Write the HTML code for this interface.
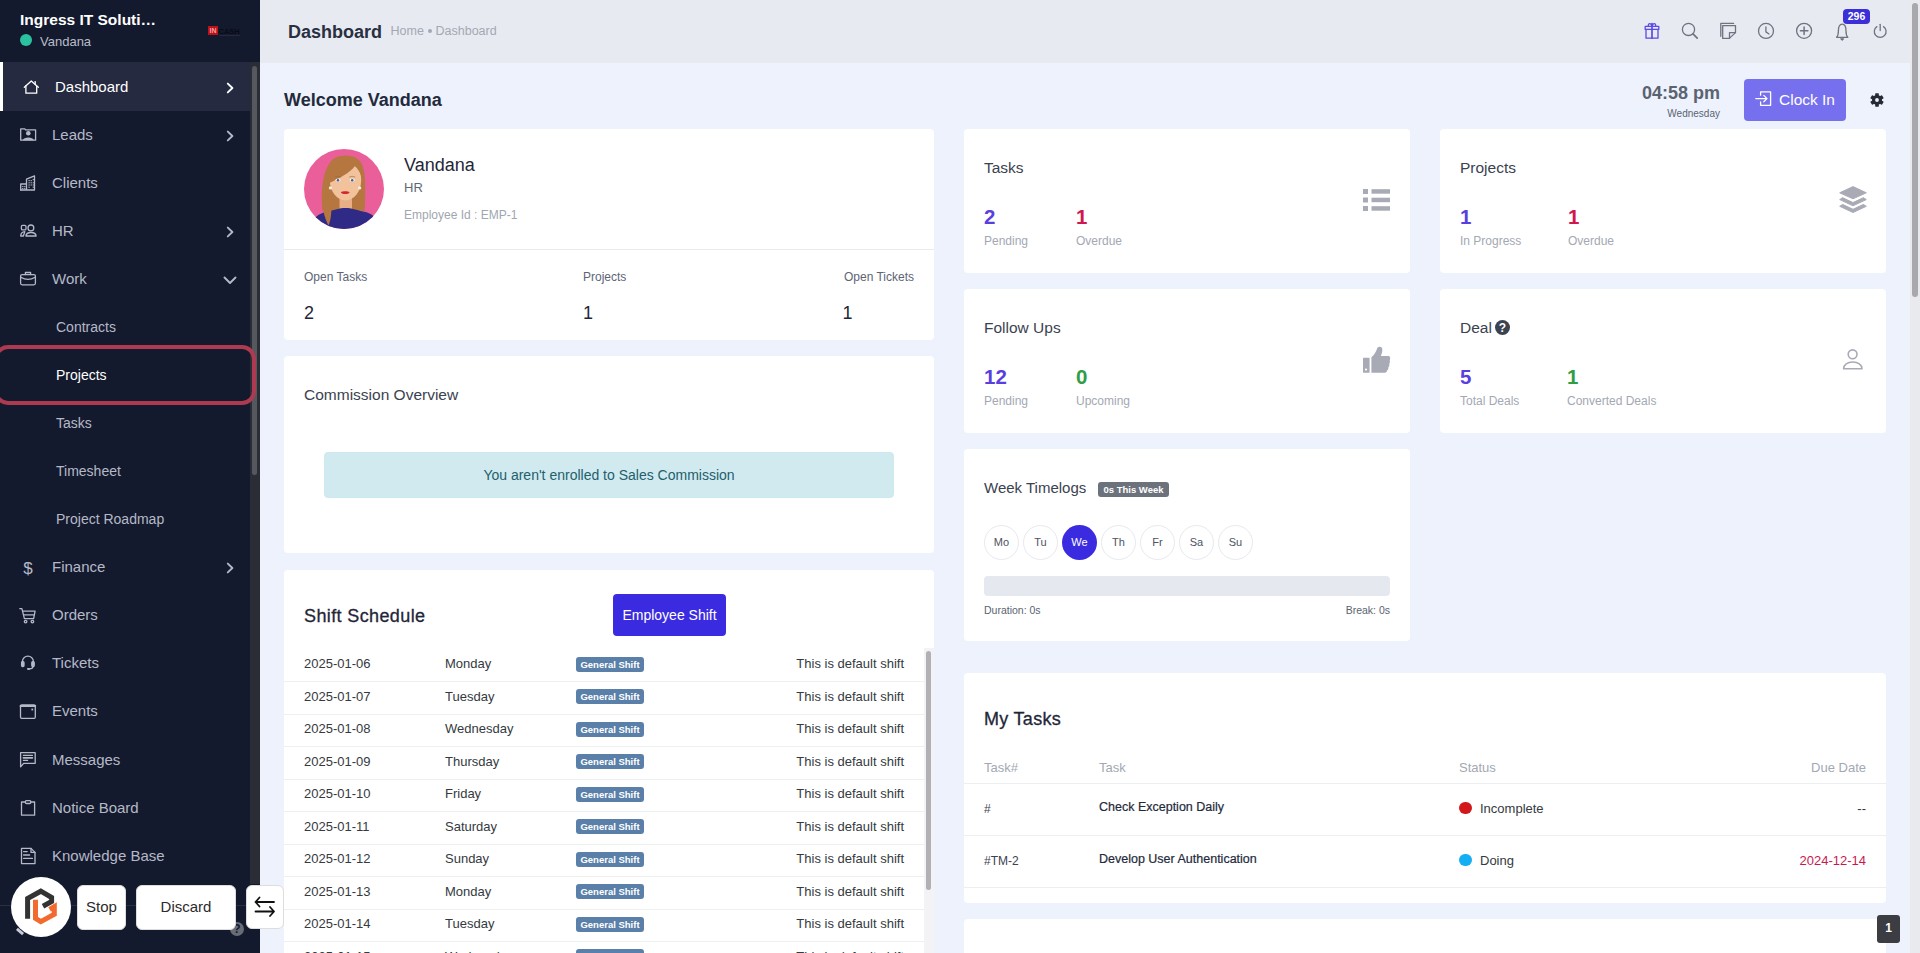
<!DOCTYPE html><html><head><meta charset="utf-8"><style>
html,body{margin:0;padding:0;width:1920px;height:953px;overflow:hidden;font-family:"Liberation Sans",sans-serif}
.t{position:absolute;line-height:1;white-space:nowrap}
</style></head><body>
<div style="position:absolute;left:0px;top:0px;width:1920px;height:953px;background:#edf2fc"></div>
<div style="position:absolute;left:260px;top:0px;width:1660px;height:63px;background:#e8eaf1"></div>
<div style="position:absolute;left:1910px;top:0px;width:10px;height:953px;background:#e9eaed"></div>
<div style="position:absolute;left:1912px;top:3px;width:6px;height:294px;background:#a8a8ad;border-radius:3px"></div>
<div style="position:absolute;left:0px;top:0px;width:260px;height:953px;background:#141a2d"></div>
<div class="t" style="left:20px;top:12.18px;font-size:15.5px;color:#ffffff;font-weight:700;">Ingress IT Soluti…</div>
<div style="position:absolute;left:20px;top:34px;width:12px;height:12px;background:#2bc39f;border-radius:50%"></div>
<div class="t" style="left:40px;top:34.50px;font-size:13px;color:#b9bdc9;font-weight:400;">Vandana</div>
<div style="position:absolute;left:208px;top:26px;width:10px;height:9px;background:#bb1118;color:#f3a0a0;font:bold 7px/9px 'Liberation Sans';text-align:center">IN</div>
<div class="t" style="left:218.5px;top:27.65px;font-size:7.5px;color:#080a14;font-weight:700;">CASH</div>
<div style="position:absolute;left:219px;top:35px;width:21px;height:1px;background:#262a3c"></div>
<div style="position:absolute;left:250px;top:62px;width:10px;height:822px;background:#2a2d35"></div>
<div style="position:absolute;left:252px;top:66px;width:5px;height:409px;background:#55585e;border-radius:3px"></div>
<div style="position:absolute;left:0px;top:62px;width:250px;height:49px;background:#252a40"></div>
<div style="position:absolute;left:0px;top:62px;width:3px;height:49px;background:#ffffff"></div>
<div class="t" style="left:55px;top:79.30px;font-size:15px;color:#ffffff;font-weight:400;">Dashboard</div>
<svg style="position:absolute;left:224px;top:80.5px" width="12" height="14" viewBox="0 0 12 14" fill="none" stroke="#ffffff" stroke-width="1.9" stroke-linecap="round" stroke-linejoin="round"><path d="M3.8 2.6 L8.4 7 L3.8 11.4"/></svg>
<div class="t" style="left:52px;top:127.30px;font-size:15px;color:#b4b9c8;font-weight:400;">Leads</div>
<svg style="position:absolute;left:224px;top:128.5px" width="12" height="14" viewBox="0 0 12 14" fill="none" stroke="#b4b9c8" stroke-width="1.9" stroke-linecap="round" stroke-linejoin="round"><path d="M3.8 2.6 L8.4 7 L3.8 11.4"/></svg>
<div class="t" style="left:52px;top:175.30px;font-size:15px;color:#b4b9c8;font-weight:400;">Clients</div>
<div class="t" style="left:52px;top:223.30px;font-size:15px;color:#b4b9c8;font-weight:400;">HR</div>
<svg style="position:absolute;left:224px;top:224.5px" width="12" height="14" viewBox="0 0 12 14" fill="none" stroke="#b4b9c8" stroke-width="1.9" stroke-linecap="round" stroke-linejoin="round"><path d="M3.8 2.6 L8.4 7 L3.8 11.4"/></svg>
<div class="t" style="left:52px;top:271.30px;font-size:15px;color:#b4b9c8;font-weight:400;">Work</div>
<svg style="position:absolute;left:223px;top:274px" width="14" height="12" viewBox="0 0 14 12" fill="none" stroke="#b4b9c8" stroke-width="1.9" stroke-linecap="round" stroke-linejoin="round"><path d="M1.5 3.5 L7 9 L12.5 3.5"/></svg>
<div class="t" style="left:56px;top:320.15px;font-size:14px;color:#b4b9c8;font-weight:400;">Contracts</div>
<div class="t" style="left:56px;top:368.15px;font-size:14px;color:#ffffff;font-weight:400;">Projects</div>
<div class="t" style="left:56px;top:416.15px;font-size:14px;color:#b4b9c8;font-weight:400;">Tasks</div>
<div class="t" style="left:56px;top:464.15px;font-size:14px;color:#b4b9c8;font-weight:400;">Timesheet</div>
<div class="t" style="left:56px;top:512.15px;font-size:14px;color:#b4b9c8;font-weight:400;">Project Roadmap</div>
<div style="position:absolute;left:-6px;top:345px;width:254px;height:52px;border:4px solid #ad3a50;border-radius:14px"></div>
<div class="t" style="left:52px;top:559.30px;font-size:15px;color:#b4b9c8;font-weight:400;">Finance</div>
<svg style="position:absolute;left:224px;top:560.5px" width="12" height="14" viewBox="0 0 12 14" fill="none" stroke="#b4b9c8" stroke-width="1.9" stroke-linecap="round" stroke-linejoin="round"><path d="M3.8 2.6 L8.4 7 L3.8 11.4"/></svg>
<div class="t" style="left:52px;top:607.30px;font-size:15px;color:#b4b9c8;font-weight:400;">Orders</div>
<div class="t" style="left:52px;top:655.30px;font-size:15px;color:#b4b9c8;font-weight:400;">Tickets</div>
<div class="t" style="left:52px;top:703.30px;font-size:15px;color:#b4b9c8;font-weight:400;">Events</div>
<div class="t" style="left:52px;top:752.30px;font-size:15px;color:#b4b9c8;font-weight:400;">Messages</div>
<div class="t" style="left:52px;top:800.30px;font-size:15px;color:#b4b9c8;font-weight:400;">Notice Board</div>
<div class="t" style="left:52px;top:848.30px;font-size:15px;color:#b4b9c8;font-weight:400;">Knowledge Base</div>
<svg style="position:absolute;left:0;top:0" width="260" height="953" viewBox="0 0 260 953" fill="none" stroke="#b4b9c8" stroke-width="1.3" stroke-linejoin="round" stroke-linecap="round">
<g stroke="#ffffff"><path d="M24.3 87.2 L31.3 80.9 L38.3 87.2"/><path d="M25.9 85.8 V93.2 H36.7 V85.8"/><path d="M35.2 81.6 V84.3"/></g>
<path d="M20.7 140.2 V128.8 H24.6 L25.6 129.9 H35.6 V140.2 Z"/>
<circle cx="28.3" cy="133.3" r="2.3" fill="#b4b9c8" stroke="none"/>
<path d="M22.8 140.2 C23.5 136.6 33.1 136.6 33.8 140.2 Z" fill="#b4b9c8" stroke="none"/>
<path d="M20.7 190 V184 H26.5"/><path d="M26.5 190 V179.2 L34.5 175.8 V190 H20.7"/>
<g fill="#b4b9c8" stroke="none"><rect x="28.5" y="180" width="1.2" height="1.2"/><rect x="30.6" y="180" width="1.2" height="1.2"/><rect x="32.7" y="179" width="1.2" height="1.2"/><rect x="28.5" y="182.2" width="1.2" height="1.2"/><rect x="30.6" y="182.2" width="1.2" height="1.2"/><rect x="32.7" y="182.2" width="1.2" height="1.2"/><rect x="28.5" y="184.4" width="1.2" height="1.2"/><rect x="30.6" y="184.4" width="1.2" height="1.2"/><rect x="32.7" y="184.4" width="1.2" height="1.2"/><rect x="28.5" y="186.6" width="1.2" height="1.2"/><rect x="32.7" y="186.6" width="1.2" height="1.2"/><rect x="22.2" y="186" width="1.2" height="1.2"/><rect x="24.2" y="186" width="1.2" height="1.2"/><rect x="22.2" y="188" width="1.2" height="1.2"/><rect x="24.2" y="188" width="1.2" height="1.2"/></g>
<circle cx="30.9" cy="227.9" r="2.9"/><path d="M25.9 236 C26.3 231.3 35.7 231.3 36.1 236 Z"/>
<rect x="21.4" y="225.3" width="4.6" height="4.6" rx="1.2"/><path d="M20.7 236 C20.8 233.6 22.4 231.8 24.8 231.6 L23.4 236 Z"/>
<rect x="20.6" y="274.6" width="14.8" height="10.2" rx="1.5"/><path d="M25.4 274.6 V272.5 H30.6 V274.6"/><path d="M20.8 277.2 Q28 281.6 35.2 277.2"/>
<path d="M19.8 608.7 H21.9 L24.4 618.7 H33.6 L35.1 611.2 H22.9"/><path d="M23.6 614.9 H34.3"/><circle cx="25.6" cy="621.6" r="1.3"/><circle cx="32.4" cy="621.6" r="1.3"/>
<path d="M22.4 664 V661.6 A5.5 5.5 0 0 1 33.4 661.6 V664"/><rect x="21.6" y="661.6" width="2.4" height="5" rx="1" fill="#b4b9c8"/><rect x="31.8" y="661.6" width="2.4" height="5" rx="1" fill="#b4b9c8"/><path d="M33 666.6 Q33 668.9 29.5 668.9"/><rect x="27" y="668.1" width="3" height="1.8" rx="0.8" fill="#b4b9c8" stroke="none"/>
<rect x="20.5" y="704.8" width="14.8" height="13.5" rx="1.2"/><path d="M20.5 706 H35.3" stroke-width="1.8"/><rect x="31.4" y="708.6" width="1.8" height="1.8" fill="#b4b9c8" stroke="none"/>
<path d="M20.6 752.7 H35.2 V763.3 H23.6 L20.6 766.8 Z"/><path d="M23.4 755.4 H32.4"/><path d="M23.4 757.8 H32.4" stroke-width="1.7"/><path d="M23.4 760.4 H27.6"/>
<path d="M25.4 802 H21.5 V815.2 H34.6 V802 H30.8"/><rect x="25.4" y="800.6" width="5.4" height="2.9" rx="1"/>
<path d="M21.5 848.4 H31 L35 852.4 V863.6 H21.5 Z"/><path d="M31 848.4 V852.4 H35"/><path d="M23.6 851.6 H27.2 M23.6 855 H29.6 M23.6 858.4 H32.4"/>
</svg>
<div class="t" style="left:23.2px;top:559.61px;font-size:17px;color:#b4b9c8;font-weight:400;">$</div>
<div style="position:absolute;left:0px;top:905px;width:260px;height:1px;background:#2a3044"></div>
<div style="position:absolute;left:16px;top:930px;width:8px;height:3px;background:#c9ccd6;transform:rotate(40deg)"></div>
<div style="position:absolute;left:229.5px;top:921.5px;width:14.5px;height:14.5px;background:#686c77;border-radius:50%"></div>
<div class="t" style="left:236.8px;transform:translateX(-50%);top:923.34px;font-size:12px;color:#141a2d;font-weight:700;">?</div>
<div style="position:absolute;left:11px;top:877px;width:60px;height:60px;border-radius:50%;background:#fff"></div>
<svg style="position:absolute;left:0;top:860px" width="80" height="80" viewBox="0 860 80 80" fill="none" stroke-width="5" stroke-linejoin="miter" stroke-linecap="butt"><path d="M27.6 918.8 V898.5 L40.8 891.2 L51.6 897.5 V901.5 L43 906.3" stroke="#333333"/><path d="M35.5 899.8 V918.3 L40.8 921.6 L54.3 914.2 V906.6 L49.6 909.3" stroke="#f26a2e"/></svg>
<div style="position:absolute;left:77px;top:885px;width:49px;height:45px;border-radius:6px;background:#fff;border:1px solid #ddd;box-sizing:border-box"></div>
<div class="t" style="left:101.5px;transform:translateX(-50%);top:899.30px;font-size:15px;color:#2b2b2b;font-weight:400;">Stop</div>
<div style="position:absolute;left:136px;top:885px;width:100px;height:45px;border-radius:6px;background:#fff;border:1px solid #ddd;box-sizing:border-box"></div>
<div class="t" style="left:186px;transform:translateX(-50%);top:899.30px;font-size:15px;color:#2b2b2b;font-weight:400;">Discard</div>
<div style="position:absolute;left:246px;top:885px;width:38px;height:44px;border-radius:6px;background:#fff;border:1px solid #ddd;box-sizing:border-box"></div>
<svg style="position:absolute;left:253px;top:895px" width="22" height="24" viewBox="0 0 22 24" fill="none" stroke="#111" stroke-width="1.8" stroke-linecap="round" stroke-linejoin="round"><path d="M2.5 7 H21 M6.5 2.5 L2.5 7 L6.5 11.5"/><path d="M21 16.5 H2.5 M17 12 L21 16.5 L17 21"/></svg>
<div class="t" style="left:288px;top:22.76px;font-size:18px;color:#283041;font-weight:700;">Dashboard</div>
<div class="t" style="left:390.5px;top:24.92px;font-size:12.5px;color:#a3a8b3;font-weight:400;">Home</div>
<div style="position:absolute;left:427.5px;top:29px;width:4px;height:4px;background:#a3a8b3;border-radius:50%"></div>
<div class="t" style="left:435.5px;top:24.92px;font-size:12.5px;color:#a3a8b3;font-weight:400;">Dashboard</div>
<svg style="position:absolute;left:1630px;top:0" width="270" height="62" viewBox="1630 0 270 62" fill="none" stroke="#6e7380" stroke-width="1.3" stroke-linecap="round" stroke-linejoin="round">
<g stroke="#5b4ae6"><rect x="1645.2" y="26.4" width="13.6" height="3"/><path d="M1646 29.4 V38.2 H1658 V29.4"/><path d="M1652 23.5 V38.2" stroke-width="1.7"/><path d="M1652 26.4 C1651 22.6 1648 22.6 1648.3 26.4"/><path d="M1652 26.4 C1653 22.6 1656 22.6 1655.7 26.4"/></g>
<circle cx="1688.5" cy="29.4" r="6.1"/><path d="M1693 33.9 L1697.2 38.1" stroke-width="1.7"/>
<path d="M1720.8 36.3 V23.4 H1733.6"/><path d="M1722.7 25.6 H1735.5 V32.6 L1729.3 38.4 H1722.7 Z"/><path d="M1735.5 32.6 H1729.5 V38.4"/>
<circle cx="1766" cy="30.9" r="7.5"/><path d="M1765.9 26.8 V31.9 L1769 34"/>
<circle cx="1804.1" cy="30.8" r="7.5"/><path d="M1804.1 27 V34.6 M1800.4 30.8 H1807.9" stroke-width="1.5"/>
<path d="M1836.6 37.3 C1838.3 35.6 1838.4 34 1838.4 31 C1838.4 26.3 1839.8 24.2 1842.2 24.2 C1844.6 24.2 1846 26.3 1846 31 C1846 34 1846.1 35.6 1847.8 37.3 Z"/><path d="M1840.9 38.8 H1843.5 L1842.2 40 Z" fill="#6e7380"/>
<path d="M1876.9 26.6 A5.9 5.9 0 1 0 1883.5 26.6"/><path d="M1880.2 24.3 V30.5"/>
</svg>
<div style="position:absolute;left:1843px;top:9px;width:27px;height:15px;border-radius:4px;background:#3b2fd9;color:#fff;font:bold 10.5px/15px 'Liberation Sans';text-align:center">296</div>
<div class="t" style="left:284px;top:90.76px;font-size:18px;color:#232a3b;font-weight:700;">Welcome Vandana</div>
<div class="t" style="right:200px;top:83.76px;font-size:18px;color:#5b6371;font-weight:700;">04:58 pm</div>
<div class="t" style="right:200px;top:108.53px;font-size:10px;color:#5b6371;font-weight:400;">Wednesday</div>
<div style="position:absolute;left:1744px;top:79px;width:102px;height:42px;border-radius:4px;background:#7770ee"></div>
<div class="t" style="left:1779px;top:92.38px;font-size:15.5px;color:#ffffff;font-weight:400;">Clock In</div>
<svg style="position:absolute;left:1750px;top:85px" width="30" height="30" viewBox="1750 85 30 30" fill="none" stroke="#fff" stroke-width="1.3" stroke-linecap="round" stroke-linejoin="round"><path d="M1755.8 98.6 H1767 M1763.8 95.4 L1767 98.6 L1763.8 101.8"/><path d="M1760.6 95.2 V91.9 H1770.6 V105.3 H1760.6 V102"/></svg>
<svg style="position:absolute;left:1867px;top:90px" width="20" height="20" viewBox="1867 90 20 20" fill="#262a35"><circle cx="1877" cy="100" r="5"/><rect x="1875.2" y="93.3" width="3.6" height="13.4" rx="0.4"/><rect x="1875.2" y="93.3" width="3.6" height="13.4" rx="0.4" transform="rotate(60 1877 100)"/><rect x="1875.2" y="93.3" width="3.6" height="13.4" rx="0.4" transform="rotate(120 1877 100)"/><circle cx="1877" cy="100" r="1.9" fill="#edf2fc"/></svg>
<div style="position:absolute;left:284px;top:129px;width:650px;height:211px;background:#ffffff;border-radius:4px"></div>
<svg style="position:absolute;left:304px;top:149px" width="80" height="80" viewBox="0 0 80 80">
<defs><clipPath id="av"><circle cx="40" cy="40" r="40"/></clipPath></defs>
<g clip-path="url(#av)">
<rect width="80" height="80" fill="#ea5f9a"/>
<path d="M18.6 62 C16.5 42 18.5 18 30 9.5 C37 5 50 5.5 56 12 C62.5 20 61.5 42 60.8 62 Z" fill="#b5773f"/>
<path d="M35.5 44 H48 V60.5 H35.5 Z" fill="#e8ae85"/>
<path d="M25.8 31 C25.8 19 33 14.5 41.5 14.5 C51 14.5 57.2 20 57.2 31 C57.2 42.5 50 51.4 41.5 51.4 C33 51.4 25.8 42.5 25.8 31 Z" fill="#f1c29b"/>
<path d="M23.5 34 C24 20 32 10.5 43 10.5 C52 10.5 57.5 17 58.5 29 C56 23 53.5 19.5 51 17 C46 24 36 28.5 26.5 33.5 Z" fill="#b5773f"/>
<path d="M7 80 C9 68 14 64.5 24 62.5 C31 61 35 59 41.5 59 C48 59 52 61 59 62.5 C69 64.5 73 68 75 80 Z" fill="#2e2a85"/>
<path d="M19 44 C17.5 58 20 68 24.5 76.5 C27.5 70 28 58 27.2 46 Z" fill="#b5773f"/>
<ellipse cx="34" cy="31.2" rx="2.6" ry="1.4" fill="#fff"/><circle cx="34" cy="31.2" r="1.3" fill="#3f5fa0"/>
<ellipse cx="48.2" cy="31.2" rx="2.6" ry="1.4" fill="#fff"/><circle cx="48.2" cy="31.2" r="1.3" fill="#3f5fa0"/>
<path d="M31 28 Q34 26.8 37 28" stroke="#9a6a3a" stroke-width="0.6" fill="none"/><path d="M45.2 28 Q48.2 26.8 51.2 28" stroke="#9a6a3a" stroke-width="0.6" fill="none"/>
<path d="M36.8 43.4 C38.5 42 44 42 45.6 43.4 C44 45.6 38.5 45.6 36.8 43.4 Z" fill="#d8262e"/>
<circle cx="26.5" cy="38.9" r="1.7" fill="#f4ecd8"/><circle cx="55.6" cy="38.9" r="1.7" fill="#f4ecd8"/>
</g></svg>
<div class="t" style="left:404px;top:155.76px;font-size:18px;color:#1f2638;font-weight:400;">Vandana</div>
<div class="t" style="left:404px;top:180.50px;font-size:13px;color:#5d6878;font-weight:400;">HR</div>
<div class="t" style="left:404px;top:209.34px;font-size:12px;color:#a0a6b0;font-weight:400;">Employee Id : EMP-1</div>
<div style="position:absolute;left:284px;top:249px;width:650px;height:1px;background:#e8eaee"></div>
<div class="t" style="left:304px;top:271.34px;font-size:12px;color:#5d6575;font-weight:400;">Open Tasks</div>
<div class="t" style="left:583px;top:271.34px;font-size:12px;color:#5d6575;font-weight:400;">Projects</div>
<div class="t" style="right:1006px;top:271.34px;font-size:12px;color:#5d6575;font-weight:400;">Open Tickets</div>
<div class="t" style="left:304px;top:303.76px;font-size:18px;color:#1f2638;font-weight:400;">2</div>
<div class="t" style="left:583px;top:303.76px;font-size:18px;color:#1f2638;font-weight:400;">1</div>
<div class="t" style="left:842.5px;top:303.76px;font-size:18px;color:#1f2638;font-weight:400;">1</div>
<div style="position:absolute;left:284px;top:356px;width:650px;height:197px;background:#ffffff;border-radius:4px"></div>
<div class="t" style="left:304px;top:386.88px;font-size:15.5px;color:#3b4250;font-weight:400;">Commission Overview</div>
<div style="position:absolute;left:324px;top:452px;width:570px;height:46px;box-sizing:border-box;border:1px solid #cde8ee;border-radius:4px;background:#d1eaf0"></div>
<div class="t" style="left:609px;transform:translateX(-50%);top:468.15px;font-size:14px;color:#22606c;font-weight:400;">You aren't enrolled to Sales Commission</div>
<div style="position:absolute;left:284px;top:570px;width:650px;height:400px;background:#ffffff;border-radius:4px"></div>
<div class="t" style="left:304px;top:606.76px;font-size:18px;color:#1f2638;font-weight:400;letter-spacing:0.38px;-webkit-text-stroke:0.3px #1f2638">Shift Schedule</div>
<div style="position:absolute;left:613px;top:594px;width:113px;height:42px;border-radius:4px;background:#3b2be0"></div>
<div class="t" style="left:669.5px;transform:translateX(-50%);top:608.15px;font-size:14px;color:#ffffff;font-weight:400;">Employee Shift</div>
<div class="t" style="left:304px;top:657.00px;font-size:13px;color:#343a40;font-weight:400;">2025-01-06</div>
<div class="t" style="left:445px;top:657.00px;font-size:13px;color:#343a40;font-weight:400;">Monday</div>
<div style="position:absolute;left:576px;top:656.5px;width:68px;height:15px;border-radius:3px;background:#5a7fa8;color:#fff;font:bold 9.5px/15px 'Liberation Sans';text-align:center">General Shift</div>
<div class="t" style="right:1016px;top:657.00px;font-size:13px;color:#343a40;font-weight:400;">This is default shift</div>
<div style="position:absolute;left:284px;top:681.0px;width:640px;height:1px;background:#edf0f3"></div>
<div class="t" style="left:304px;top:689.50px;font-size:13px;color:#343a40;font-weight:400;">2025-01-07</div>
<div class="t" style="left:445px;top:689.50px;font-size:13px;color:#343a40;font-weight:400;">Tuesday</div>
<div style="position:absolute;left:576px;top:689.0px;width:68px;height:15px;border-radius:3px;background:#5a7fa8;color:#fff;font:bold 9.5px/15px 'Liberation Sans';text-align:center">General Shift</div>
<div class="t" style="right:1016px;top:689.50px;font-size:13px;color:#343a40;font-weight:400;">This is default shift</div>
<div style="position:absolute;left:284px;top:713.5px;width:640px;height:1px;background:#edf0f3"></div>
<div class="t" style="left:304px;top:722.00px;font-size:13px;color:#343a40;font-weight:400;">2025-01-08</div>
<div class="t" style="left:445px;top:722.00px;font-size:13px;color:#343a40;font-weight:400;">Wednesday</div>
<div style="position:absolute;left:576px;top:721.5px;width:68px;height:15px;border-radius:3px;background:#5a7fa8;color:#fff;font:bold 9.5px/15px 'Liberation Sans';text-align:center">General Shift</div>
<div class="t" style="right:1016px;top:722.00px;font-size:13px;color:#343a40;font-weight:400;">This is default shift</div>
<div style="position:absolute;left:284px;top:746.0px;width:640px;height:1px;background:#edf0f3"></div>
<div class="t" style="left:304px;top:754.50px;font-size:13px;color:#343a40;font-weight:400;">2025-01-09</div>
<div class="t" style="left:445px;top:754.50px;font-size:13px;color:#343a40;font-weight:400;">Thursday</div>
<div style="position:absolute;left:576px;top:754.0px;width:68px;height:15px;border-radius:3px;background:#5a7fa8;color:#fff;font:bold 9.5px/15px 'Liberation Sans';text-align:center">General Shift</div>
<div class="t" style="right:1016px;top:754.50px;font-size:13px;color:#343a40;font-weight:400;">This is default shift</div>
<div style="position:absolute;left:284px;top:778.5px;width:640px;height:1px;background:#edf0f3"></div>
<div class="t" style="left:304px;top:787.00px;font-size:13px;color:#343a40;font-weight:400;">2025-01-10</div>
<div class="t" style="left:445px;top:787.00px;font-size:13px;color:#343a40;font-weight:400;">Friday</div>
<div style="position:absolute;left:576px;top:786.5px;width:68px;height:15px;border-radius:3px;background:#5a7fa8;color:#fff;font:bold 9.5px/15px 'Liberation Sans';text-align:center">General Shift</div>
<div class="t" style="right:1016px;top:787.00px;font-size:13px;color:#343a40;font-weight:400;">This is default shift</div>
<div style="position:absolute;left:284px;top:811.0px;width:640px;height:1px;background:#edf0f3"></div>
<div class="t" style="left:304px;top:819.50px;font-size:13px;color:#343a40;font-weight:400;">2025-01-11</div>
<div class="t" style="left:445px;top:819.50px;font-size:13px;color:#343a40;font-weight:400;">Saturday</div>
<div style="position:absolute;left:576px;top:819.0px;width:68px;height:15px;border-radius:3px;background:#5a7fa8;color:#fff;font:bold 9.5px/15px 'Liberation Sans';text-align:center">General Shift</div>
<div class="t" style="right:1016px;top:819.50px;font-size:13px;color:#343a40;font-weight:400;">This is default shift</div>
<div style="position:absolute;left:284px;top:843.5px;width:640px;height:1px;background:#edf0f3"></div>
<div class="t" style="left:304px;top:852.00px;font-size:13px;color:#343a40;font-weight:400;">2025-01-12</div>
<div class="t" style="left:445px;top:852.00px;font-size:13px;color:#343a40;font-weight:400;">Sunday</div>
<div style="position:absolute;left:576px;top:851.5px;width:68px;height:15px;border-radius:3px;background:#5a7fa8;color:#fff;font:bold 9.5px/15px 'Liberation Sans';text-align:center">General Shift</div>
<div class="t" style="right:1016px;top:852.00px;font-size:13px;color:#343a40;font-weight:400;">This is default shift</div>
<div style="position:absolute;left:284px;top:876.0px;width:640px;height:1px;background:#edf0f3"></div>
<div class="t" style="left:304px;top:884.50px;font-size:13px;color:#343a40;font-weight:400;">2025-01-13</div>
<div class="t" style="left:445px;top:884.50px;font-size:13px;color:#343a40;font-weight:400;">Monday</div>
<div style="position:absolute;left:576px;top:884.0px;width:68px;height:15px;border-radius:3px;background:#5a7fa8;color:#fff;font:bold 9.5px/15px 'Liberation Sans';text-align:center">General Shift</div>
<div class="t" style="right:1016px;top:884.50px;font-size:13px;color:#343a40;font-weight:400;">This is default shift</div>
<div style="position:absolute;left:284px;top:908.5px;width:640px;height:1px;background:#edf0f3"></div>
<div class="t" style="left:304px;top:917.00px;font-size:13px;color:#343a40;font-weight:400;">2025-01-14</div>
<div class="t" style="left:445px;top:917.00px;font-size:13px;color:#343a40;font-weight:400;">Tuesday</div>
<div style="position:absolute;left:576px;top:916.5px;width:68px;height:15px;border-radius:3px;background:#5a7fa8;color:#fff;font:bold 9.5px/15px 'Liberation Sans';text-align:center">General Shift</div>
<div class="t" style="right:1016px;top:917.00px;font-size:13px;color:#343a40;font-weight:400;">This is default shift</div>
<div style="position:absolute;left:284px;top:941.0px;width:640px;height:1px;background:#edf0f3"></div>
<div class="t" style="left:304px;top:949.50px;font-size:13px;color:#343a40;font-weight:400;">2025-01-15</div>
<div class="t" style="left:445px;top:949.50px;font-size:13px;color:#343a40;font-weight:400;">Wednesday</div>
<div style="position:absolute;left:576px;top:949.0px;width:68px;height:15px;border-radius:3px;background:#5a7fa8;color:#fff;font:bold 9.5px/15px 'Liberation Sans';text-align:center">General Shift</div>
<div class="t" style="right:1016px;top:949.50px;font-size:13px;color:#343a40;font-weight:400;">This is default shift</div>
<div style="position:absolute;left:284px;top:973.5px;width:640px;height:1px;background:#edf0f3"></div>
<div style="position:absolute;left:924px;top:648px;width:10px;height:305px;background:#f3f3f5"></div>
<div style="position:absolute;left:926px;top:651px;width:5px;height:239px;background:#b0b0b5;border-radius:3px"></div>
<div style="position:absolute;left:964px;top:129px;width:446px;height:144px;background:#ffffff;border-radius:4px"></div>
<div class="t" style="left:984px;top:159.88px;font-size:15.5px;color:#3b4250;font-weight:400;">Tasks</div>
<div class="t" style="left:984px;top:207.15px;font-size:20.5px;color:#5a3fe0;font-weight:700;">2</div>
<div class="t" style="left:984px;top:234.84px;font-size:12px;color:#a3a8b3;font-weight:400;">Pending</div>
<div class="t" style="left:1076px;top:207.15px;font-size:20.5px;color:#d2164e;font-weight:700;">1</div>
<div class="t" style="left:1076px;top:234.84px;font-size:12px;color:#a3a8b3;font-weight:400;">Overdue</div>
<div style="position:absolute;left:1440px;top:129px;width:446px;height:144px;background:#ffffff;border-radius:4px"></div>
<div class="t" style="left:1460px;top:159.88px;font-size:15.5px;color:#3b4250;font-weight:400;">Projects</div>
<div class="t" style="left:1460px;top:207.15px;font-size:20.5px;color:#5a3fe0;font-weight:700;">1</div>
<div class="t" style="left:1460px;top:234.84px;font-size:12px;color:#a3a8b3;font-weight:400;">In Progress</div>
<div class="t" style="left:1568px;top:207.15px;font-size:20.5px;color:#d2164e;font-weight:700;">1</div>
<div class="t" style="left:1568px;top:234.84px;font-size:12px;color:#a3a8b3;font-weight:400;">Overdue</div>
<div style="position:absolute;left:964px;top:289px;width:446px;height:144px;background:#ffffff;border-radius:4px"></div>
<div class="t" style="left:984px;top:319.88px;font-size:15.5px;color:#3b4250;font-weight:400;">Follow Ups</div>
<div class="t" style="left:984px;top:367.15px;font-size:20.5px;color:#5a3fe0;font-weight:700;">12</div>
<div class="t" style="left:984px;top:394.84px;font-size:12px;color:#a3a8b3;font-weight:400;">Pending</div>
<div class="t" style="left:1076px;top:367.15px;font-size:20.5px;color:#2f9d46;font-weight:700;">0</div>
<div class="t" style="left:1076px;top:394.84px;font-size:12px;color:#a3a8b3;font-weight:400;">Upcoming</div>
<div style="position:absolute;left:1440px;top:289px;width:446px;height:144px;background:#ffffff;border-radius:4px"></div>
<div class="t" style="left:1460px;top:319.88px;font-size:15.5px;color:#3b4250;font-weight:400;">Deal</div>
<div class="t" style="left:1460px;top:367.15px;font-size:20.5px;color:#5a3fe0;font-weight:700;">5</div>
<div class="t" style="left:1460px;top:394.84px;font-size:12px;color:#a3a8b3;font-weight:400;">Total Deals</div>
<div class="t" style="left:1567px;top:367.15px;font-size:20.5px;color:#2f9d46;font-weight:700;">1</div>
<div class="t" style="left:1567px;top:394.84px;font-size:12px;color:#a3a8b3;font-weight:400;">Converted Deals</div>
<svg style="position:absolute;left:1362px;top:188.5px" width="28" height="22" viewBox="0 0 28 22" fill="#a8abb6"><rect x="1" y="0" width="5" height="5"/><rect x="1" y="8.5" width="5" height="5"/><rect x="1" y="17" width="5" height="5"/><rect x="9.5" y="0.2" width="18.5" height="4.5"/><rect x="9.5" y="8.7" width="18.5" height="4.5"/><rect x="9.5" y="17.2" width="18.5" height="4.5"/></svg>
<svg style="position:absolute;left:1838.5px;top:186px" width="28" height="28" viewBox="0 0 28 28" fill="#a8abb6" stroke="#a8abb6" stroke-width="1" stroke-linejoin="round"><path d="M14 0.6 L27.3 6.8 L14 12.8 L0.7 6.8 Z"/><path d="M0.7 13.6 L3.6 11.7 L14 16.6 L24.4 11.7 L27.3 13.6 L14 19.8 Z"/><path d="M0.7 20.3 L3.6 18.4 L14 23.3 L24.4 18.4 L27.3 20.3 L14 26.5 Z"/></svg>
<svg style="position:absolute;left:1363px;top:346px" width="28" height="28" viewBox="0 0 28 28" fill="#a8abb6"><rect x="0" y="11.8" width="6.6" height="15" rx="0.6"/><circle cx="3" cy="23.6" r="1.1" fill="#fff"/><path d="M8.4 11.2 C11 9 13.2 5.5 14.2 2.2 C14.8 0.2 19 0 19.3 3 C19.5 5.8 18.6 8.3 17.8 10 H25.3 C26.9 10 27.6 11.6 27 13.1 L26.7 14.4 C27.2 15.5 27 16.9 26.2 17.7 C26.6 19 26.3 20.4 25.4 21.2 C25.6 22.7 25 23.9 24 24.5 L23.7 25.8 C23.2 26.6 22.2 26.8 20.8 26.8 H8.4 Z"/></svg>
<div style="position:absolute;left:1495px;top:320px;width:15px;height:15px;background:#3b4250;border-radius:50%"></div>
<div class="t" style="left:1502.5px;transform:translateX(-50%);top:321.84px;font-size:12px;color:#ffffff;font-weight:700;">?</div>
<svg style="position:absolute;left:1841px;top:347px" width="23" height="25" viewBox="0 0 23 25" fill="none" stroke="#a8abb6" stroke-width="1.6" stroke-linecap="round" stroke-linejoin="round"><circle cx="11.6" cy="7.3" r="4.4"/><path d="M2.6 21.8 C2.6 17.6 6.5 15 11.7 15 C17 15 21 17.6 21 21.8 Z"/></svg>
<div style="position:absolute;left:964px;top:449px;width:446px;height:192px;background:#ffffff;border-radius:4px"></div>
<div class="t" style="left:984px;top:480.30px;font-size:15px;color:#3b4250;font-weight:400;">Week Timelogs</div>
<div style="position:absolute;left:1098px;top:482px;width:71px;height:15px;border-radius:3px;background:#6c727c;color:#fff;font:bold 9.5px/16px 'Liberation Sans';text-align:center">0s This Week</div>
<div style="position:absolute;left:984.0px;top:525px;width:35px;height:35px;box-sizing:border-box;border:1px solid #e7e9ee;border-radius:50%"></div>
<div class="t" style="left:1001.5px;transform:translateX(-50%);top:537.19px;font-size:11px;color:#4d5362;font-weight:400;">Mo</div>
<div style="position:absolute;left:1023.0px;top:525px;width:35px;height:35px;box-sizing:border-box;border:1px solid #e7e9ee;border-radius:50%"></div>
<div class="t" style="left:1040.5px;transform:translateX(-50%);top:537.19px;font-size:11px;color:#4d5362;font-weight:400;">Tu</div>
<div style="position:absolute;left:1062.0px;top:525px;width:35px;height:35px;background:#3b2be0;border-radius:50%"></div>
<div class="t" style="left:1079.5px;transform:translateX(-50%);top:537.19px;font-size:11px;color:#ffffff;font-weight:400;">We</div>
<div style="position:absolute;left:1101.0px;top:525px;width:35px;height:35px;box-sizing:border-box;border:1px solid #e7e9ee;border-radius:50%"></div>
<div class="t" style="left:1118.5px;transform:translateX(-50%);top:537.19px;font-size:11px;color:#4d5362;font-weight:400;">Th</div>
<div style="position:absolute;left:1140.0px;top:525px;width:35px;height:35px;box-sizing:border-box;border:1px solid #e7e9ee;border-radius:50%"></div>
<div class="t" style="left:1157.5px;transform:translateX(-50%);top:537.19px;font-size:11px;color:#4d5362;font-weight:400;">Fr</div>
<div style="position:absolute;left:1179.0px;top:525px;width:35px;height:35px;box-sizing:border-box;border:1px solid #e7e9ee;border-radius:50%"></div>
<div class="t" style="left:1196.5px;transform:translateX(-50%);top:537.19px;font-size:11px;color:#4d5362;font-weight:400;">Sa</div>
<div style="position:absolute;left:1218.0px;top:525px;width:35px;height:35px;box-sizing:border-box;border:1px solid #e7e9ee;border-radius:50%"></div>
<div class="t" style="left:1235.5px;transform:translateX(-50%);top:537.19px;font-size:11px;color:#4d5362;font-weight:400;">Su</div>
<div style="position:absolute;left:984px;top:576px;width:406px;height:20px;background:#e5e8ef;border-radius:4px"></div>
<div class="t" style="left:984px;top:605.11px;font-size:10.5px;color:#5b6371;font-weight:400;">Duration: 0s</div>
<div class="t" style="right:530px;top:605.11px;font-size:10.5px;color:#5b6371;font-weight:400;">Break: 0s</div>
<div style="position:absolute;left:964px;top:673px;width:922px;height:230px;background:#ffffff;border-radius:4px"></div>
<div class="t" style="left:984px;top:709.76px;font-size:18px;color:#1f2638;font-weight:400;letter-spacing:0.3px;-webkit-text-stroke:0.3px #1f2638">My Tasks</div>
<div class="t" style="left:984px;top:761.00px;font-size:13px;color:#a3a8b3;font-weight:400;">Task#</div>
<div class="t" style="left:1099px;top:761.00px;font-size:13px;color:#a3a8b3;font-weight:400;">Task</div>
<div class="t" style="left:1459px;top:761.00px;font-size:13px;color:#a3a8b3;font-weight:400;">Status</div>
<div class="t" style="right:54px;top:761.00px;font-size:13px;color:#a3a8b3;font-weight:400;">Due Date</div>
<div style="position:absolute;left:964px;top:783px;width:922px;height:1px;background:#eceef2"></div>
<div class="t" style="left:984px;top:802.84px;font-size:12px;color:#3b4250;font-weight:400;">#</div>
<div class="t" style="left:1099px;top:801.42px;font-size:12.5px;color:#232a3b;font-weight:400;-webkit-text-stroke:0.2px #232a3b">Check Exception Daily</div>
<div style="position:absolute;left:1459px;top:801.5px;width:12.5px;height:12.5px;background:#d3181c;border-radius:50%"></div>
<div class="t" style="left:1480px;top:801.50px;font-size:13px;color:#343a40;font-weight:400;">Incomplete</div>
<div class="t" style="right:54px;top:802.00px;font-size:13px;color:#343a40;font-weight:400;">--</div>
<div style="position:absolute;left:964px;top:835px;width:922px;height:1px;background:#eceef2"></div>
<div class="t" style="left:984px;top:854.84px;font-size:12px;color:#3b4250;font-weight:400;">#TM-2</div>
<div class="t" style="left:1099px;top:853.42px;font-size:12.5px;color:#232a3b;font-weight:400;-webkit-text-stroke:0.2px #232a3b">Develop User Authentication</div>
<div style="position:absolute;left:1459px;top:853.5px;width:12.5px;height:12.5px;background:#14aef2;border-radius:50%"></div>
<div class="t" style="left:1480px;top:853.50px;font-size:13px;color:#343a40;font-weight:400;">Doing</div>
<div class="t" style="right:54px;top:853.50px;font-size:13px;color:#c8194f;font-weight:400;">2024-12-14</div>
<div style="position:absolute;left:964px;top:887px;width:922px;height:1px;background:#eceef2"></div>
<div style="position:absolute;left:964px;top:919px;width:922px;height:60px;background:#ffffff;border-radius:4px"></div>
<div style="position:absolute;left:1877px;top:915px;width:23px;height:28px;border-radius:3px;background:#3c3d42;color:#fff;font:bold 12px/27px 'Liberation Sans';text-align:center">1</div>
</body></html>
